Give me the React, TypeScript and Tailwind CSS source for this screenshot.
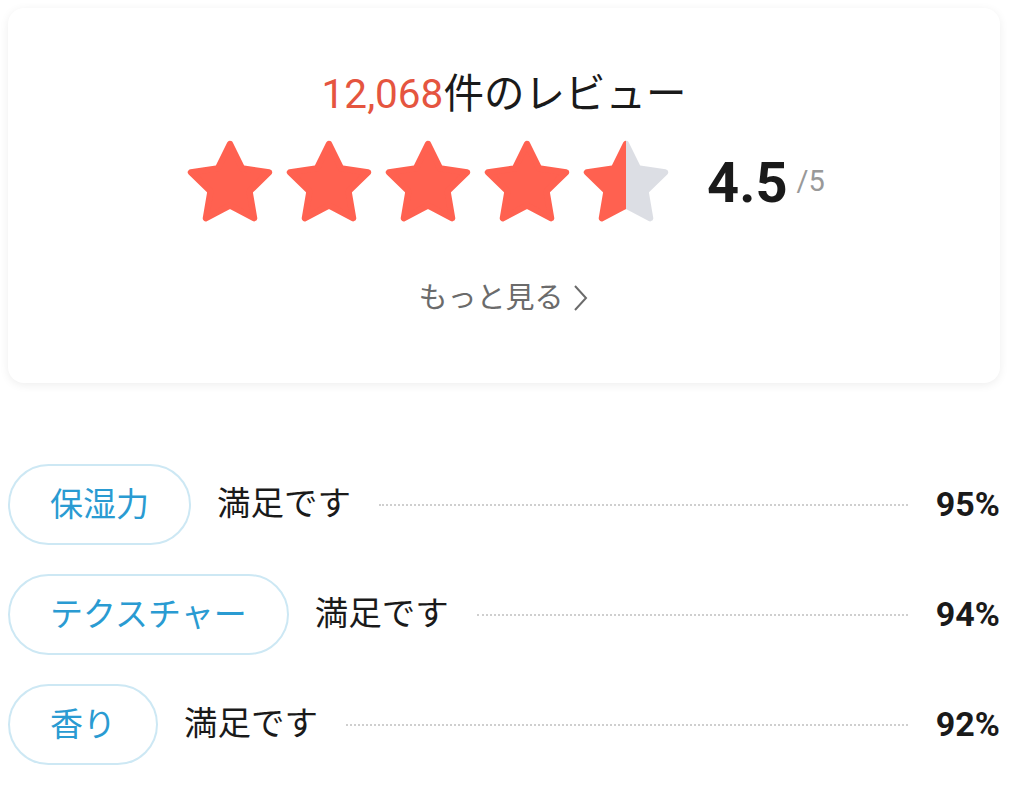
import React from "react";

const FONT = { fontFamily: "Roboto, 'Noto Sans CJK JP', sans-serif" };

const STAR_POINTS =
  "12,2 15.09,8.26 22,9.27 17,14.14 18.18,21.02 12,17.77 5.82,21.02 7,14.14 2,9.27 8.91,8.26";

function Star({ fill, id }: { fill: number; id: string }) {
  const on = "#ff6150";
  const off = "#dcdee4";
  const paint = fill >= 1 ? on : fill <= 0 ? off : `url(#${id})`;
  return (
    <svg width="86" height="86" viewBox="1 1 22 22" className="shrink-0">
      {fill > 0 && fill < 1 && (
        <defs>
          <linearGradient id={id} x1="0" x2="1" y1="0" y2="0">
            <stop offset={`${fill * 100}%`} stopColor={on} />
            <stop offset={`${fill * 100}%`} stopColor={off} />
          </linearGradient>
        </defs>
      )}
      <polygon
        points={STAR_POINTS}
        fill={paint}
        stroke={paint}
        strokeWidth="1.6"
        strokeLinejoin="round"
      />
    </svg>
  );
}

const rows = [
  { label: "保湿力", value: "95%" },
  { label: "テクスチャー", value: "94%" },
  { label: "香り", value: "92%" },
];

export default function App() {
  const rating = 4.5;
  return (
    <div className="min-h-screen bg-white" style={FONT}>
      <div className="mx-2 mt-2 w-[992px] rounded-2xl bg-white pt-[62px] pb-[65px] shadow-[0_2px_10px_rgba(0,0,0,0.07)]">
        <h2 className="text-center text-[40.5px] leading-[48px] text-[#1a1a1a]">
          <span className="text-[#e5553f]">12,068</span>件のレビュー
        </h2>
        <div className="mt-[22px] flex items-center justify-center pl-[4px]">
          <div className="flex gap-[13px]">
            {[0, 1, 2, 3, 4].map((i) => (
              <Star key={i} id={`half-${i}`} fill={Math.min(1, Math.max(0, rating - i))} />
            ))}
          </div>
          <span className="ml-[38px] text-[56px] font-bold leading-none text-[#1a1a1a]">4.5</span>
          <span className="ml-[9px] mt-[-4px] text-[29px] leading-none text-[#999]">/5</span>
        </div>
        <div className="mt-[52px] flex items-center justify-center text-[29px] leading-[40px] text-[#6b6b6b]">
          <span>もっと見る</span>
          <svg width="20" height="30" viewBox="0 0 20 30" className="ml-[6px]">
            <path d="M5 3 L16 15 L5 27" fill="none" stroke="#6b6b6b" strokeWidth="2" />
          </svg>
        </div>
      </div>

      <div className="mt-[81px] flex flex-col gap-[29px] pl-2 pr-6">
        {rows.map((r) => (
          <div key={r.label} className="flex items-center">
            <div className="flex h-[81px] items-center rounded-full border-2 border-[#cde8f4] px-[40px] text-[33px] text-[#2a9bd2]">
              {r.label}
            </div>
            <span className="ml-[26px] text-[33.5px] text-[#1a1a1a]">満足です</span>
            <div className="mx-[28px] flex-1 border-t-2 border-dotted border-[#cfcfcf]" />
            <span className="text-[34px] font-bold text-[#1a1a1a]">{r.value}</span>
          </div>
        ))}
      </div>
    </div>
  );
}
